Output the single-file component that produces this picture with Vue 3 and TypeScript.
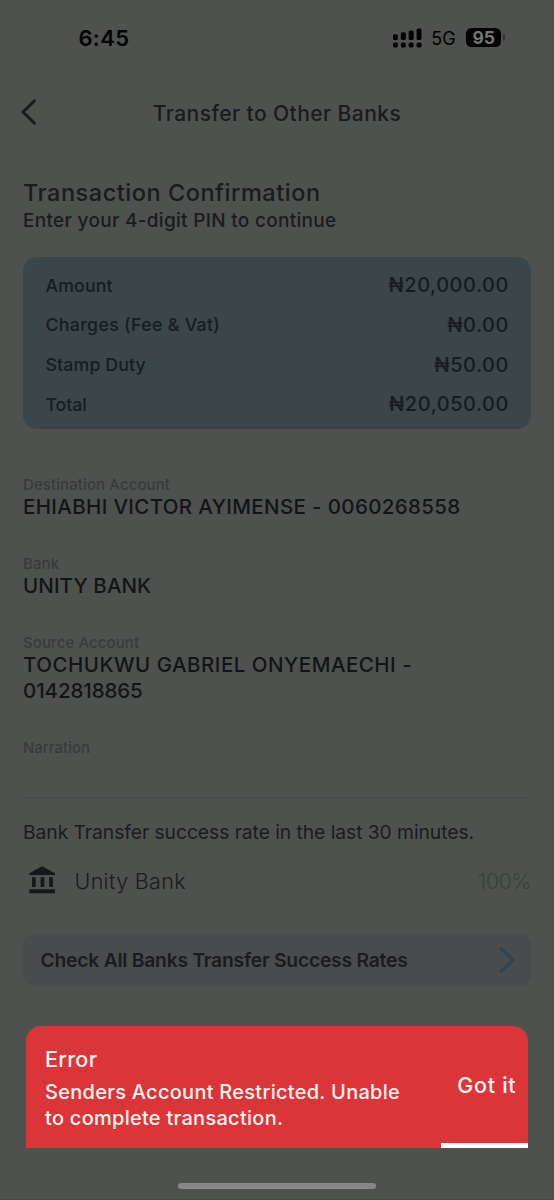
<script setup lang="ts">
interface Fee { label: string; value: string; cls: string }
interface Detail { label: string; lines: string[]; cls: string }

const fees: Fee[] = [
  { label: 'Amount', value: '₦20,000.00', cls: '' },
  { label: 'Charges (Fee & Vat)', value: '₦0.00', cls: 'wide' },
  { label: 'Stamp Duty', value: '₦50.00', cls: '' },
  { label: 'Total', value: '₦20,050.00', cls: 'tight' },
]

const details: Detail[] = [
  { label: 'Destination Account', lines: ['EHIABHI VICTOR AYIMENSE - 0060268558'], cls: 'destination' },
  { label: 'Bank', lines: ['UNITY BANK'], cls: 'bank-name' },
  { label: 'Source Account', lines: ['TOCHUKWU GABRIEL ONYEMAECHI -', '0142818865'], cls: 'source' },
  { label: 'Narration', lines: [], cls: 'narration' },
]
</script>

<template>
  <div class="screen">
    <div class="status">
      <span class="time">6:45</span>
      <div class="indicators">
        <svg class="signal" width="30" height="20" viewBox="0 0 30 20">
          <rect x="0" y="6.2" width="4.9" height="5.8" rx="1.5" />
          <rect x="7.9" y="4.3" width="4.9" height="7.7" rx="1.5" />
          <rect x="15.7" y="2.6" width="4.9" height="9.4" rx="1.5" />
          <rect x="23.6" y="0.6" width="4.9" height="11.4" rx="1.5" />
          <rect v-for="x in [0, 7.9, 15.7, 23.6]" :key="x" :x="x" y="14.6" width="4.9" height="5" rx="1.6" />
        </svg>
        <span class="network">5G</span>
        <span class="battery">95</span>
        <span class="nub"></span>
      </div>
    </div>

    <header class="nav">
      <svg class="back" width="18" height="28" viewBox="0 0 18 28">
        <path d="M14.5 2.7 L3 14 L14.5 25.3" />
      </svg>
      <span class="nav-title">Transfer to Other Banks</span>
    </header>

    <main class="content">
      <h1>Transaction Confirmation</h1>
      <p class="hint">Enter your 4-digit PIN to continue</p>

      <section class="fees">
        <div v-for="f in fees" :key="f.label" class="fee">
          <span class="fee-label" :class="f.cls">{{ f.label }}</span>
          <span class="fee-value">{{ f.value }}</span>
        </div>
      </section>

      <section v-for="d in details" :key="d.label" class="detail" :class="d.cls">
        <div class="label">{{ d.label }}</div>
        <div v-for="l in d.lines" :key="l" class="value">{{ l }}</div>
      </section>

      <section class="rates">
        <p class="rate-title">Bank Transfer success rate in the last 30 minutes.</p>
        <div class="rate">
          <svg width="27" height="28" viewBox="0 0 27 28">
            <path d="M0.3 9 V7.2 L13 0.3 L26 7.2 V9 Z M3 11.3 H6.7 V21 H3 Z M11.6 11.3 H15.3 V21 H11.6 Z M20.1 11.3 H23.9 V21 H20.1 Z M0.3 23.3 H26 V27.3 H0.3 Z" />
          </svg>
          <span class="rate-bank">Unity Bank</span>
          <span class="rate-value">100%</span>
        </div>
        <div class="check">
          <span>Check All Banks Transfer Success Rates</span>
          <svg width="18" height="28" viewBox="0 0 18 28">
            <path d="M3 2.5 L15 14 L3 25.5" />
          </svg>
        </div>
      </section>
    </main>

    <aside class="toast">
      <div class="toast-body">
        <div class="toast-title">Error</div>
        <p>Senders Account Restricted. Unable<br />to complete transaction.</p>
      </div>
      <div class="toast-action">
        <span>Got it</span>
      </div>
    </aside>
    <div class="home"></div>
  </div>
</template>

<style>
body {
  margin: 0;
  background: #4f514f;
}
</style>

<style scoped>
.screen {
  box-sizing: border-box;
  width: 554px;
  height: 1200px;
  background: #4f514f;
  border-bottom: 1px solid #474847;
  display: flex;
  flex-direction: column;
  overflow: hidden;
  font-family: Inter, sans-serif;
  font-weight: 500;
  color: #1a1b1e;
  white-space: nowrap;
}
h1, p { margin: 0; font-weight: 500; }
.status {
  height: 75px;
  flex: none;
  display: flex;
  align-items: center;
  justify-content: space-between;
  padding: 0 49px 0 78.5px;
  color: #020202;
}
.time { font-size: 22px; font-weight: 600; line-height: 30px; letter-spacing: 0.3px; }
.indicators { display: flex; align-items: center; }
.signal { fill: #020202; margin-right: 8px; }
.network { font-size: 18px; line-height: 24px; padding-top: 2px; margin-right: 10.5px; font-weight: 400; }
.battery {
  width: 35px;
  height: 19px;
  border-radius: 5.5px;
  background: #020202;
  color: #747674;
  font-size: 17.5px;
  font-weight: 700;
  line-height: 19px;
  text-align: center;
}
.nub { width: 2px; height: 7px; margin-left: 1.8px; border-radius: 0 2px 2px 0; background: #343534; }
.nav {
  height: 77px;
  flex: none;
  display: grid;
  grid-template-columns: 60px 1fr 60px;
  align-items: center;
  box-sizing: border-box;
}
.back { margin: -3px 0 0 20px; }
.back path { fill: none; stroke: #191a1c; stroke-width: 2.9; stroke-linecap: round; }
.nav-title { font-size: 21px; line-height: 28px; letter-spacing: 0.43px; text-align: center; }
.content { padding: 25px 23px 0; flex: none; }
h1 { font-size: 23.5px; line-height: 32px; letter-spacing: 0.53px; }
.hint { font-size: 19px; line-height: 24px; letter-spacing: 0.3px; }
.fees {
  box-sizing: border-box;
  height: 172px;
  margin-top: 24.4px;
  padding: 7.8px 22.5px 0;
  border-radius: 14px;
  background: #3b464a;
  color: #171c20;
}
.fee { height: 39.8px; display: flex; align-items: center; justify-content: space-between; }
.fee-label { font-size: 17.8px; letter-spacing: 0.1px; }
.fee-label.wide { letter-spacing: 0.3px; }
.fee-label.tight { letter-spacing: -0.1px; }
.fee-value { font-size: 20px; letter-spacing: 0.55px; margin-right: -0.5px; }
.detail { box-sizing: border-box; height: 79px; }
.destination { margin-top: 47.1px; }
.label { font-size: 15px; line-height: 18px; letter-spacing: 0.1px; color: #383a3b; }
.value { font-size: 20.5px; line-height: 26px; color: #131417; }
.destination .value { letter-spacing: 0.36px; }
.bank-name .value { letter-spacing: 0.1px; }
.source { height: 105px; }
.source .value { letter-spacing: 0.5px; }
.source .value:last-child { letter-spacing: -0.1px; }
.narration { height: 60px; border-bottom: 2px solid #4a4c4e; }
.narration .label { letter-spacing: 0; }
.rates { padding-top: 17px; }
.rate-title { font-size: 19.3px; font-weight: 400; line-height: 32px; letter-spacing: -0.06px; }
.rate { height: 66px; display: flex; align-items: center; padding-left: 6px; }
.rate svg { fill: #17181b; margin-top: -3px; }
.rate-bank { font-size: 21.5px; font-weight: 300; letter-spacing: 0.32px; margin-left: 18.5px; }
.rate-value { font-size: 21.5px; font-weight: 300; letter-spacing: -0.5px; margin-left: auto; color: #304637; }
.check {
  box-sizing: border-box;
  height: 52px;
  margin-top: 19.3px;
  padding: 0 15px 0 17.5px;
  border-radius: 11px;
  background: #4a4b4d;
  display: flex;
  align-items: center;
  justify-content: space-between;
  font-size: 19.3px;
  font-weight: 600;
  letter-spacing: -0.22px;
}
.check svg { margin: 0; }
.check path { fill: none; stroke: #254757; stroke-width: 2.6; stroke-linecap: round; }
.toast {
  box-sizing: border-box;
  flex: none;
  width: 502px;
  height: 122px;
  margin: 40px 0 0 26px;
  border-radius: 15px 15px 0 0;
  background: #db3439;
  color: #fff4ef;
  display: flex;
  justify-content: space-between;
  overflow: hidden;
}
.toast-body { padding: 18.5px 0 0 19px; }
.toast-title { font-size: 21.5px; line-height: 30px; letter-spacing: 0.3px; }
.toast-body p { font-size: 20px; line-height: 26px; letter-spacing: 0.27px; margin-top: 4.5px; }
.toast-action {
  box-sizing: border-box;
  width: 87.5px;
  border-bottom: 5px solid #fff;
  display: flex;
  align-items: center;
  justify-content: center;
  padding: 2px 0 0 5px;
  font-size: 21.5px;
  letter-spacing: 0.7px;
}
.home { flex: none; width: 198px; height: 6.5px; margin: 35px 0 0 178px; border-radius: 4px; background: #868786; }
</style>
